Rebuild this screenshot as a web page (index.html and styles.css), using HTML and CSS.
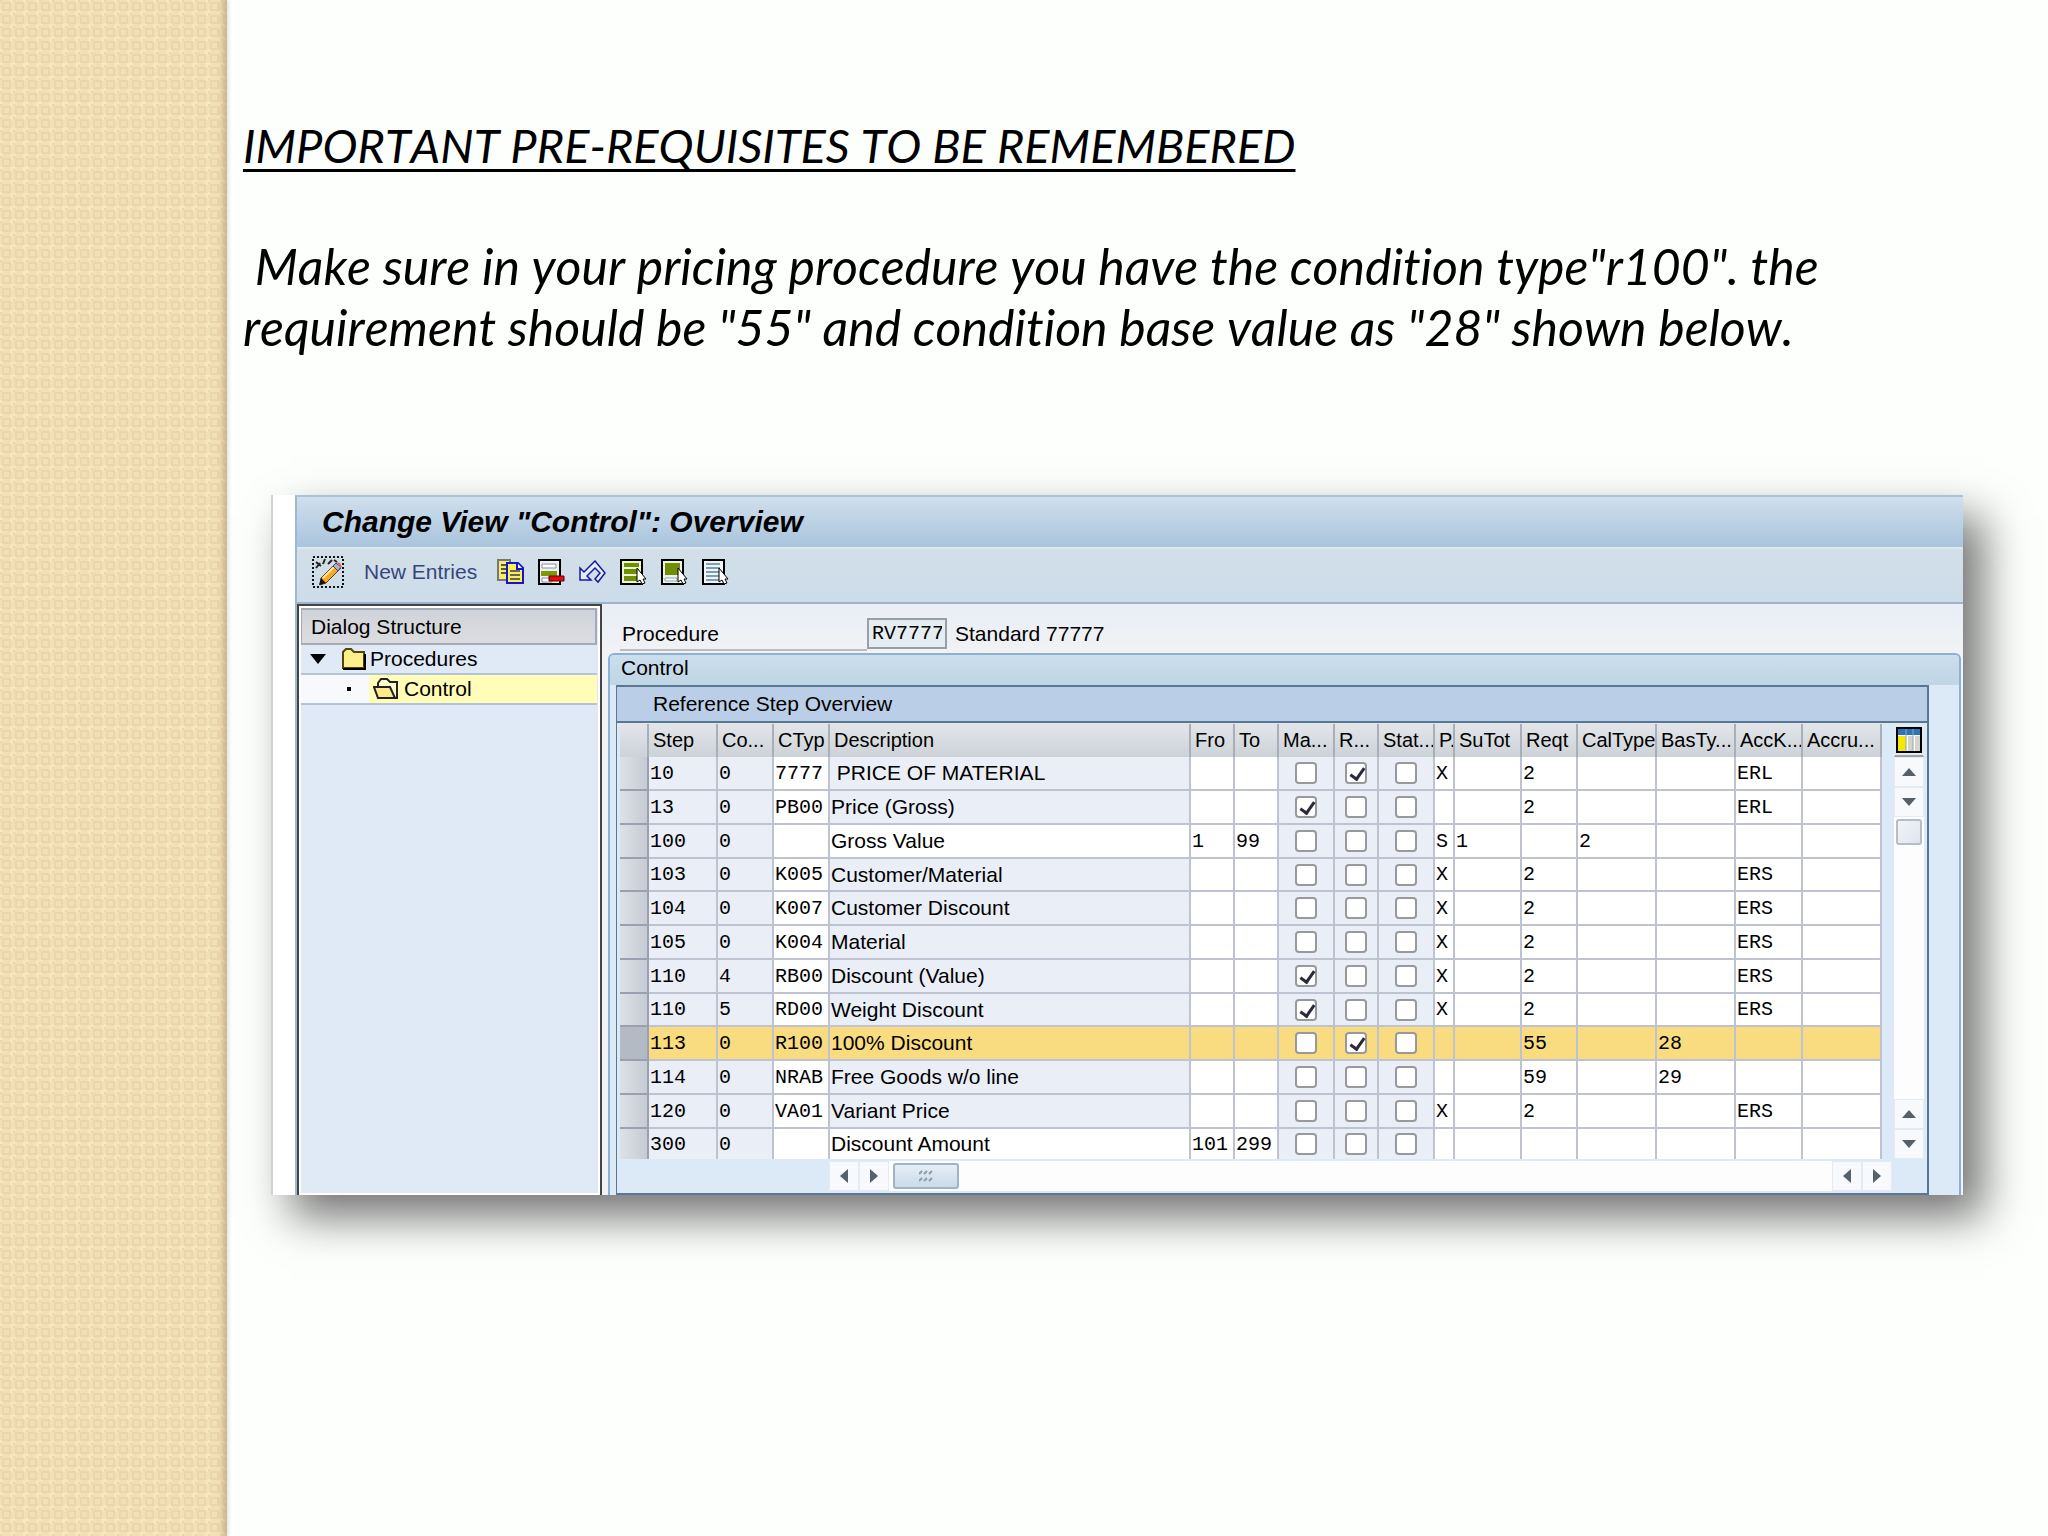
FILE: index.html
```html
<!DOCTYPE html>
<html lang="en">
<head>
  <meta charset="utf-8">
  <title>Important Pre-requisites</title>
  <link rel="stylesheet" href="styles.css">
</head>
<body>
  <div class="slide">
    <aside class="strip">
      <svg width="100%" height="100%" aria-hidden="true">
        <defs>
          <pattern id="weave" width="13" height="13" patternUnits="userSpaceOnUse">
            <rect width="13" height="13" fill="#f2dfb8"/>
            <rect x="0" y="10" width="3" height="3" fill="#f8e6bf"/>
            <rect x="10" y="0" width="3" height="3" fill="#f8e6bf"/>
            <rect x="0" y="0" width="2" height="2" fill="#ebd7ae"/>
            <rect x="10" y="11" width="3" height="2" fill="#f8e6bf"/>
            <rect x="3" y="3" width="7" height="7" fill="none" stroke="#ead6ad" stroke-width="2"/>
          </pattern>
        </defs>
        <rect width="100%" height="100%" fill="url(#weave)"/>
      </svg>
    </aside>
    <main class="content">
      <h1>IMPORTANT PRE-REQUISITES TO BE REMEMBERED</h1>
      <p class="note">&nbsp;Make sure in your pricing procedure you have the condition type"r100". the requirement should be "55" and condition base value as "28" shown below.</p>

      <div class="shot">
        <div class="window">
          <header class="titlebar">Change View "Control": Overview</header>
          <div class="toolbar">
            <button class="tool edit" aria-label="Display / Change">
              <svg width="32" height="32" viewBox="0 0 32 32">
                <rect x="1" y="1" width="30" height="30" fill="none" stroke="#111" stroke-width="2" stroke-dasharray="2 2"/>
                <path d="M4 6l5 4M4 12l4-5M13 3l-2 5M16 8l4-4M22 4l3 2" stroke="#222" stroke-width="2" fill="none"/>
                <path d="M9 22L24 7l5 5-15 15-6 2z" fill="#f7a823" stroke="#6b3d10"/>
                <path d="M11 22L24 9" stroke="#ffe9a0" stroke-width="2"/>
                <path d="M21 10l3-3 5 4-3 4z" fill="#9db4dd" stroke="#444"/>
                <path d="M25 6l3 1 2 4-2 1z" fill="#e0685c"/>
                <path d="M9 22l5 5-7 2z" fill="#111"/>
              </svg>
            </button>
            <button class="tool text">New Entries</button>
            <button class="tool" aria-label="Copy As">
              <svg width="27" height="26" viewBox="0 0 27 26">
                <path d="M1 1h12v20H1z" fill="#f7ee6a" stroke="#777" stroke-width="2"/>
                <path d="M4 6h5M4 10h5M4 14h5" stroke="#555" stroke-width="2"/>
                <path d="M10 4h11l5 5v15H10z" fill="#fbf04e" stroke="#1414d2" stroke-width="2"/>
                <path d="M20 4v6h6" fill="#fff" stroke="#1414d2" stroke-width="2"/>
                <path d="M13 12h10M13 16h10M13 20h10" stroke="#666" stroke-width="2"/>
              </svg>
            </button>
            <button class="tool" aria-label="Delete">
              <svg width="27" height="26" viewBox="0 0 27 26">
                <path d="M1 1h21v24H1z" fill="#eef2ee" stroke="#000" stroke-width="2"/>
                <path d="M4 5h14v4H4zM4 19h10v4H4z" fill="#fff" stroke="#8a86b5"/>
                <path d="M3 12h16v5H3z" fill="#7a9a08"/>
                <path d="M11 17h15v5H11z" fill="#e30d0d" stroke="#600"/>
              </svg>
            </button>
            <button class="tool" aria-label="Undo Change">
              <svg width="27" height="24" viewBox="0 0 27 24">
                <path d="M1 8v12h11l-4-4 8-8 5 5-5 6 3 3 7-9L16 1 5 12z" fill="#e6edf8" stroke="#1818a8" stroke-width="1.5"/>
              </svg>
            </button>
            <button class="tool" aria-label="Select All">
              <svg width="27" height="26" viewBox="0 0 27 26">
                <path d="M1 1h21v24H1z" fill="#eef4d8" stroke="#000" stroke-width="2"/>
                <path d="M4 4h15v4H4zM4 10h15v5H4zM4 17h15v5H4z" fill="#6d8f00"/>
                <path d="M17 9v14l3-2 2 4 3-1-2-4h3z" fill="#fff" stroke="#000"/>
              </svg>
            </button>
            <button class="tool" aria-label="Select Block">
              <svg width="27" height="26" viewBox="0 0 27 26">
                <path d="M1 1h21v24H1z" fill="#eef2e8" stroke="#000" stroke-width="2"/>
                <path d="M4 4h15v12H4z" fill="#6d8f00"/>
                <path d="M4 19h12v3H4z" fill="#fff" stroke="#8aa4b5"/>
                <path d="M17 9v14l3-2 2 4 3-1-2-4h3z" fill="#fff" stroke="#000"/>
              </svg>
            </button>
            <button class="tool" aria-label="Deselect All">
              <svg width="27" height="26" viewBox="0 0 27 26">
                <path d="M1 1h21v24H1z" fill="#eef4f8" stroke="#000" stroke-width="2"/>
                <path d="M4 5h14M4 9h14M4 13h14M4 17h14M4 21h14" stroke="#7d9fb2" stroke-width="2"/>
                <path d="M17 9v14l3-2 2 4 3-1-2-4h3z" fill="#fff" stroke="#000"/>
              </svg>
            </button>
          </div>

          <div class="workarea">
            <nav class="tree">
              <div class="tree-head">Dialog Structure</div>
              <a class="node" href="#">
                <svg width="16" height="10" viewBox="0 0 16 10"><path d="M0 0h16L8 10z"/></svg>
                <svg class="folder" width="24" height="22" viewBox="0 0 24 22"><path d="M1 20V4l3-3h5l3 3h10v16z" fill="#fdf08c" stroke="#55430a" stroke-width="2"/><path d="M1 21h22V6" fill="none" stroke="#000" stroke-width="2"/></svg>
                Procedures
              </a>
              <a class="node child" href="#">
                <span class="bullet"></span>
                <span class="selected">
                  <svg width="26" height="22" viewBox="0 0 26 22"><path d="M5 9V5l3-4h6l3 3h7v16h-2" fill="#fffbd0" stroke="#222" stroke-width="2"/><path d="M1 9h16l5 11H5z" fill="#fde98a" stroke="#222" stroke-width="2"/></svg>
                  Control
                </span>
              </a>
            </nav>

            <section class="detail">
              <div class="field">
                <label for="procedure">Procedure</label>
                <input id="procedure" type="text" value="RV7777" readonly>
                <span>Standard 77777</span>
              </div>
              <div class="group">
                <h2>Control</h2>
                <div class="overview">
                  <h3>Reference Step Overview</h3>
                  <div class="grid">
                    <table>
                      <colgroup>
                        <col class="w-sel"><col class="w-step"><col class="w-mid"><col class="w-mid"><col>
                        <col class="w-num"><col class="w-num"><col class="w-mid"><col class="w-num"><col class="w-mid">
                        <col class="w-p"><col class="w-sutot"><col class="w-mid"><col class="w-wide"><col class="w-wide"><col class="w-acck"><col class="w-wide">
                      </colgroup>
                      <thead>
                        <tr><th></th><th>Step</th><th>Co...</th><th>CTyp</th><th>Description</th><th>Fro</th><th>To</th><th>Ma...</th><th>R...</th><th>Stat...</th><th>P.</th><th>SuTot</th><th>Reqt</th><th>CalType</th><th>BasTy...</th><th>AccK...</th><th>Accru...</th></tr>
                      </thead>
                      <tbody id="steps"></tbody>
                    </table>
                    <div class="vbar">
                      <button class="config" aria-label="Table settings">
                        <svg width="26" height="26" viewBox="0 0 26 26"><path d="M1 1h24v24H1z" fill="#fff" stroke="#000" stroke-width="2"/><path d="M2 2h22v6H2z" fill="#2b76b8"/><path d="M2 9h8v15H2z" fill="#f6e800"/><path d="M12 9h5v15h-5zM19 9h5v15h-5z" fill="#d4d4cc"/><path d="M10 2v22M17 2v22" stroke="#8fa7b5"/></svg>
                      </button>
                      <button aria-label="Scroll up"><svg width="14" height="8" viewBox="0 0 14 8"><path d="M0 8h14L7 0z"/></svg></button>
                      <button aria-label="Scroll down"><svg width="14" height="8" viewBox="0 0 14 8"><path d="M0 0h14L7 8z"/></svg></button>
                      <div class="track"><span class="thumb"></span></div>
                      <button aria-label="Page up"><svg width="14" height="8" viewBox="0 0 14 8"><path d="M0 8h14L7 0z"/></svg></button>
                      <button aria-label="Page down"><svg width="14" height="8" viewBox="0 0 14 8"><path d="M0 0h14L7 8z"/></svg></button>
                    </div>
                  </div>
                  <div class="hbar">
                    <button aria-label="Scroll left"><svg width="8" height="14" viewBox="0 0 8 14"><path d="M8 0v14L0 7z"/></svg></button>
                    <button aria-label="Scroll right"><svg width="8" height="14" viewBox="0 0 8 14"><path d="M0 0v14l8-7z"/></svg></button>
                    <div class="track"><span class="thumb"><svg width="14" height="12" viewBox="0 0 14 12"><path d="M0 4l3-3M5 4l3-3M10 4l3-3M0 11l3-3M5 11l3-3M10 11l3-3" stroke="#8b9dab" stroke-width="2"/></svg></span></div>
                    <button aria-label="Page left"><svg width="8" height="14" viewBox="0 0 8 14"><path d="M8 0v14L0 7z"/></svg></button>
                    <button aria-label="Page right"><svg width="8" height="14" viewBox="0 0 8 14"><path d="M0 0v14l8-7z"/></svg></button>
                  </div>
                </div>
              </div>
            </section>
          </div>
        </div>
      </div>
    </main>
  </div>
  <script src="script.js"></script>
</body>
</html>
```
FILE: script.js
```js
// step, counter, ctyp, description, from, to, manual, required, statistical, print, sutot, reqt, caltype, bastype, acckey
const steps = [
  ['10', '0', '7777', '\u00a0PRICE OF MATERIAL', '', '', 0, 1, 0, 'X', '', '2', '', '', 'ERL'],
  ['13', '0', 'PB00', 'Price (Gross)', '', '', 1, 0, 0, '', '', '2', '', '', 'ERL'],
  ['100', '0', '', 'Gross Value', '1', '99', 0, 0, 0, 'S', '1', '', '2', '', ''],
  ['103', '0', 'K005', 'Customer/Material', '', '', 0, 0, 0, 'X', '', '2', '', '', 'ERS'],
  ['104', '0', 'K007', 'Customer Discount', '', '', 0, 0, 0, 'X', '', '2', '', '', 'ERS'],
  ['105', '0', 'K004', 'Material', '', '', 0, 0, 0, 'X', '', '2', '', '', 'ERS'],
  ['110', '4', 'RB00', 'Discount (Value)', '', '', 1, 0, 0, 'X', '', '2', '', '', 'ERS'],
  ['110', '5', 'RD00', 'Weight Discount', '', '', 1, 0, 0, 'X', '', '2', '', '', 'ERS'],
  ['113', '0', 'R100', '100% Discount', '', '', 0, 1, 0, '', '', '55', '', '28', ''],
  ['114', '0', 'NRAB', 'Free Goods w/o line', '', '', 0, 0, 0, '', '', '59', '', '29', ''],
  ['120', '0', 'VA01', 'Variant Price', '', '', 0, 0, 0, 'X', '', '2', '', '', 'ERS'],
  ['300', '0', '', 'Discount Amount', '101', '299', 0, 0, 0, '', '', '', '', '', '']
];
const checkNames = { 6: 'Manual', 7: 'Required', 8: 'Statistical' };
const body = document.getElementById('steps');

steps.forEach((step) => {
  const row = body.insertRow();
  if (step[0] == '113') row.className = 'current';
  row.insertCell().className = 'sel';

  step.forEach((value, i) => {
    const cell = row.insertCell();
    if (i in checkNames) {
      const box = document.createElement('input');
      box.type = 'checkbox';
      box.checked = value == 1;
      box.setAttribute('aria-label', checkNames[i] + ' ' + step[0]);
      cell.className = 'check';
      cell.appendChild(box);
      return;
    }
    cell.textContent = value;
    if (i < 2) cell.className = 'locked';
    // a step without a condition type has an editable description
    if (i == 3) cell.className = step[2] ? 'desc locked' : 'desc';
  });
  row.insertCell();
});
```
FILE: styles.css
```css
* {
  box-sizing: border-box;
}
body {
  margin: 0;
  background: #fdfffd;
  color: #000;
  font-family: "Liberation Sans", Arial, sans-serif;
  font-size: 21px;
}
button {
  padding: 0;
  border: none;
  background: none;
  font: inherit;
}
svg {
  display: block;
}
.slide {
  display: grid;
  grid-template-columns: 227px 1fr;
  min-height: 100vh;
}
.strip {
  position: relative;
  overflow: hidden;
  box-shadow: 1px 0 4px rgba(0, 0, 0, 0.15);
}
.strip svg {
  position: absolute;
  inset: 0;
}
.strip::after {
  content: "";
  position: absolute;
  inset: 0 0 0 auto;
  width: 10px;
  background: linear-gradient(to right, transparent, rgba(170, 140, 90, 0.45));
}
.content {
  padding: 114px 85px 40px 16px;
}
h1, .note {
  margin: 0;
  font-family: Lato, Calibri, sans-serif;
  font-size: 47px;
  font-style: italic;
  font-weight: 400;
  font-kerning: none;
  font-variant-ligatures: none;
  line-height: 62px;
}
h1 {
  text-decoration: underline;
  text-decoration-skip-ink: none;
  text-decoration-thickness: 3px;
  text-underline-offset: 6px;
}
.note {
  margin-top: 60px;
  font-size: 50px;
  line-height: 61px;
}

/* SAP window */
.shot {
  margin: 137px 0 0 28px;
  padding-left: 22px;
  border-left: 2px solid #d2d2d4;
  background: #fff;
  box-shadow: 20px 22px 42px rgba(0, 0, 0, 0.55);
}
.window {
  border-left: 2px solid #9db9d2;
  border-top: 2px solid #a9c3d8;
  background: #eaeef6;
}
.titlebar {
  height: 50px;
  padding-left: 25px;
  background: linear-gradient(#cfdfed, #a9c4dc);
  font-size: 30px;
  font-style: italic;
  font-weight: bold;
  line-height: 50px;
}
.toolbar {
  display: flex;
  align-items: center;
  gap: 14px;
  height: 57px;
  padding: 0 0 8px 15px;
  border-top: 2px solid #dde8ef;
  border-bottom: 2px solid #9fb3c6;
  background: linear-gradient(#d2dfe8, #cddcea);
}
.tool.text {
  margin: 0 6px;
  color: #36467c;
}
.workarea {
  display: flex;
}
.tree {
  flex: none;
  width: 305px;
  padding: 2px 3px 0 2px;
  border: solid #444;
  border-width: 2px 2px 0 2px;
  background: #dfeaf6;
  box-shadow: inset 0 0 0 2px #fff;
}
.tree-head {
  height: 37px;
  padding-left: 9px;
  border: solid #a3a9b6;
  border-width: 2px 2px 2px 1px;
  background: linear-gradient(#cfd3da, #dcdde0);
  line-height: 34px;
}
.node {
  display: flex;
  align-items: center;
  height: 30px;
  padding-left: 9px;
  border-bottom: 2px solid #b4c4d8;
  color: #000;
  text-decoration: none;
}
.folder {
  margin: 0 4px 0 16px;
}
.child {
  padding-left: 0;
  background: #f7f9fd;
}
.bullet {
  width: 4px;
  height: 4px;
  margin: 0 18px 0 46px;
  background: #000;
}
.selected {
  display: flex;
  flex: 1;
  align-items: center;
  gap: 5px;
  height: 28px;
  padding-left: 4px;
  background: #fffdb8;
}
.detail {
  flex: 1;
  min-width: 0;
  padding: 14px 2px 0 6px;
  background: linear-gradient(#e9eef8, #f0f2f3 46px);
}
.field {
  display: flex;
  margin-bottom: 2px;
  padding-left: 12px;
  line-height: 31px;
}
.field label {
  width: 247px;
  padding-left: 2px;
  border-bottom: 2px solid #b9bcc0;
}
.field input {
  width: 80px;
  height: 31px;
  margin-right: 8px;
  padding: 0 3px;
  border: 2px solid #999fa5;
  background: #e4eef2;
  font-family: "Liberation Mono", monospace;
  font-size: 20px;
}
.group {
  border: 2px solid #8fb0d4;
  border-bottom: none;
  border-radius: 6px 6px 0 0;
  background: #dce9f6;
}
h2, h3 {
  margin: 0;
  font-size: 21px;
  font-weight: 400;
}
h2 {
  height: 30px;
  padding-left: 11px;
  border-radius: 4px 4px 0 0;
  background: linear-gradient(#cbdeed, #bfd6e5);
  line-height: 26px;
}
.overview {
  margin: 0 30px 0 6px;
  border: 2px solid #5a7690;
  border-width: 2px 2px 2px 1px;
  background: #dce9f6;
}
h3 {
  height: 36px;
  padding-left: 36px;
  border-bottom: 2px solid #5a7690;
  background: #bacfe7;
  line-height: 34px;
}
.grid {
  display: flex;
  gap: 12px;
  padding: 1px 3px 0;
}
table {
  flex: 1;
  min-width: 0;
  width: 0;
  table-layout: fixed;
  border-collapse: separate;
  border-spacing: 0;
}
.w-sel { width: 29px; }
.w-step { width: 69px; }
.w-mid { width: 56px; }
.w-num { width: 44px; }
.w-p { width: 20px; }
.w-sutot { width: 67px; }
.w-wide { width: 79px; }
.w-acck { width: 67px; }
th, td {
  padding: 0 0 0 1px;
  overflow: hidden;
  border-right: 2px solid #bfc2d0;
  text-align: left;
  white-space: nowrap;
}
th {
  height: 33px;
  padding-left: 4px;
  border-right-color: #a9afb8;
  background: linear-gradient(#e2e6e9, #cdd2d8);
  font-size: 20px;
  font-weight: 400;
}
td {
  height: 34px;
  border-bottom: 2px solid #bfc2d0;
  background: #fff;
  font-family: "Liberation Mono", monospace;
  font-size: 20px;
}
tr:nth-child(4n) td {
  height: 33px;
}
tr:last-child td {
  height: 30px;
  border-bottom: none;
}
.locked, .check {
  background: #eaeff7;
}
.desc {
  font-family: "Liberation Sans", Arial, sans-serif;
  font-size: 21px;
}
.current td {
  background: #fadc80;
}
td.sel {
  border-color: #9c9fb0;
  background: linear-gradient(to right, #dde1e7, #c6cbd4);
}
.current td.sel {
  background: #b3bac4;
}
.check {
  padding: 0;
  text-align: center;
}
.check input {
  appearance: none;
  display: block;
  position: relative;
  width: 22px;
  height: 22px;
  margin: 0 auto;
  border: 2px solid #98999d;
  border-radius: 4px;
  background: #fff;
}
.check input:checked::after {
  content: "";
  position: absolute;
  left: 6px;
  top: 1px;
  width: 6px;
  height: 12px;
  border: solid #2a2a3c;
  border-width: 0 3px 3px 0;
  transform: rotate(35deg);
}

/* scroll bars */
.vbar {
  display: flex;
  flex-direction: column;
  width: 30px;
}
.vbar button, .hbar button {
  display: flex;
  flex: none;
  align-items: center;
  justify-content: center;
  width: 30px;
  height: 30px;
  border: 1px solid #e3ebf3;
  background: #f7f9fc;
  fill: #56606b;
}
.vbar .config {
  height: 33px;
  border-bottom: 2px solid #9ca3ad;
  background: #e4e9ee;
}
.track {
  flex: 1;
  background: #fdfdfe;
}
.thumb {
  display: flex;
  align-items: center;
  justify-content: center;
  border: 2px solid #b5bdcb;
  border-radius: 3px;
  background: linear-gradient(135deg, #f2f4f8, #dfe4ee);
}
.vbar .thumb {
  width: 26px;
  height: 26px;
  margin: 2px;
}
.hbar {
  display: flex;
  height: 32px;
  margin: 2px 35px 0 212px;
}
.hbar .thumb {
  width: 66px;
  height: 26px;
  margin: 2px 4px;
  border-color: #9fb2c6;
  background: linear-gradient(#e6eef5, #c9dae8);
}
.hbar .track {
  height: 30px;
}
```
